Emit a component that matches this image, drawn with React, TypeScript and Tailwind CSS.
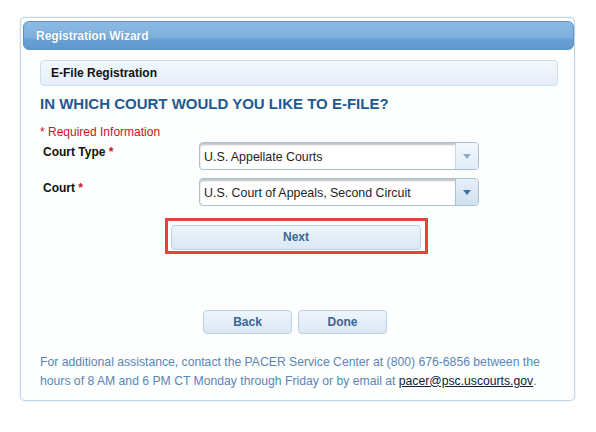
function SelectBox({ value, active }: { value: string; active?: boolean }) {
  return (
    <div className="flex h-[28px] w-[280px] overflow-hidden rounded-[4px] border border-[#a9c0d5] bg-white shadow-[inset_0_2px_2px_rgba(0,0,0,0.25)]">
      <div className="flex flex-1 items-center pl-[4px] pt-[2px] text-[12.4px] text-[#1e1e1e]">
        {value}
      </div>
      <div
        className={
          active
            ? "flex w-[23px] items-center justify-center border-l border-[#a9c0d5] bg-gradient-to-b from-[#e6eff8] to-[#cfe0f0]"
            : "flex w-[23px] items-center justify-center border-l border-[#c6d6e5] bg-gradient-to-b from-[#f2f7fc] to-[#e2ecf6]"
        }
      >
        <svg width="8" height="5" viewBox="0 0 8 5">
          <path d="M0 0H8L4 5Z" fill={active ? "#3f6f9f" : "#8fabc8"} />
        </svg>
      </div>
    </div>
  );
}

function Button({ label, size }: { label: string; size: string }) {
  return (
    <button
      type="button"
      className={`${size} rounded-[4px] border border-[#bcd0e3] bg-gradient-to-b from-[#eef5fc] to-[#dbe8f5] text-[12px] font-bold text-[#3c6595]`}
    >
      {label}
    </button>
  );
}

export default function App() {
  return (
    <div className="min-h-[432px] bg-white pl-[20px] pt-[17px] font-['Liberation_Sans',Arial,sans-serif]">
      <div className="flex h-[384px] w-[555px] flex-col rounded-[5px] border border-[#c3d6e6] bg-[#fdfefe] pl-[2px] pt-[3px] shadow-[0_0_2px_rgba(150,180,210,0.4)]">
        <div className="flex h-[29px] items-center rounded-[6px] border border-[#5a92c6] bg-[linear-gradient(to_bottom,#8cbbe4_0%,#7dafdc_60%,#69a1d3_62%,#5f98cd_100%)] pl-[12px] text-[12px] font-bold text-white [text-shadow:0_0_1px_rgba(40,80,120,0.5)]">
          Registration Wizard
        </div>

        <div className="flex flex-col pl-[17px] pr-[16px]">
          <div className="mt-[10px] flex h-[26px] items-center rounded-[4px] border border-[#cddeee] bg-gradient-to-b from-[#f1f7fd] to-[#e5eff9] pl-[10px] text-[12px] font-bold text-[#111]">
            E-File Registration
          </div>

          <h1 className="mt-[9px] text-[15px] font-bold leading-[18px] text-[#1d5a94]">
            IN WHICH COURT WOULD YOU LIKE TO E-FILE?
          </h1>

          <p className="mt-[10px] text-[12px] leading-[18px] text-[#d0101e]">
            * Required Information
          </p>

          <div className="mt-[1px] flex flex-col gap-[8px]">
            <div className="flex">
              <div className="w-[159px] pl-[3px] pt-[1px] text-[12px] font-bold text-[#111]">
                Court Type <span className="text-[#d0101e]">*</span>
              </div>
              <SelectBox value="U.S. Appellate Courts" />
            </div>
            <div className="flex">
              <div className="w-[159px] pl-[3px] pt-[1px] text-[12px] font-bold text-[#111]">
                Court <span className="text-[#d0101e]">*</span>
              </div>
              <SelectBox value="U.S. Court of Appeals, Second Circuit" active />
            </div>
          </div>

          <div className="ml-[125px] mt-[12px] w-[263px] border-[3px] border-[#e5433e] p-[3px] pb-[1px]">
            <Button label="Next" size="h-[25px] w-[250px]" />
          </div>

          <div className="ml-[163px] mt-[56px] flex gap-[6px]">
            <Button label="Back" size="h-[24px] w-[89px]" />
            <Button label="Done" size="h-[24px] w-[89px]" />
          </div>

          <div className="mt-[19px] text-[12.2px] leading-[19px] text-[#5a86b6]">
            <p>
              For additional assistance, contact the PACER Service Center at (800) 676-6856 between the
            </p>
            <p className="flex">
              <span className="whitespace-pre">hours of 8 AM and 6 PM CT Monday through Friday or by email at </span>
              <a href="#" className="text-[#10203a] underline">
                pacer@psc.uscourts.gov
              </a>
              <span>.</span>
            </p>
          </div>
        </div>
      </div>
    </div>
  );
}
